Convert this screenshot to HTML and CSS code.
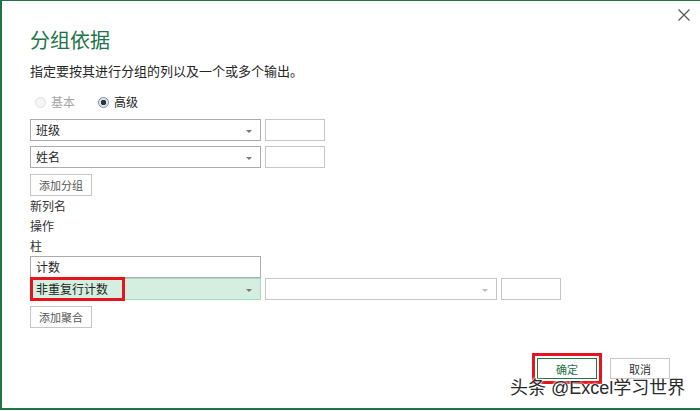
FILE: index.html
```html
<!DOCTYPE html>
<html>
<head>
    <title>分组依据</title>
    <link rel="stylesheet" href="styles.css">
</head>
<body>
    <div class="dialog">
        <button class="close" aria-label="关闭">
            <svg width="12" height="12" viewBox="0 0 12 12">
                <path d="M0.5 0.5 L11.5 11.5 M11.5 0.5 L0.5 11.5" stroke="#555" stroke-width="1.2" fill="none"/>
            </svg>
        </button>

        <h1 class="title">分组依据</h1>
        <p class="subtitle">指定要按其进行分组的列以及一个或多个输出。</p>

        <div class="mode">
            <label class="radio disabled"><span class="dot"></span>基本</label>
            <label class="radio checked"><span class="dot"></span>高级</label>
        </div>

        <div class="group-rows">
            <div class="row">
                <div class="select">班级<i class="arrow"></i></div>
                <div class="box"></div>
            </div>
            <div class="row">
                <div class="select">姓名<i class="arrow"></i></div>
                <div class="box"></div>
            </div>
        </div>
        <button class="btn">添加分组</button>

        <div class="label">新列名</div>
        <div class="label">操作</div>
        <div class="label">柱</div>

        <div class="text-input">计数</div>
        <div class="row">
            <div class="select active">非重复行计数<i class="arrow"></i><span class="mark"></span></div>
            <div class="select wide empty"><i class="arrow"></i></div>
            <div class="box"></div>
        </div>
        <button class="btn">添加聚合</button>

        <div class="footer">
            <button class="btn ok">确定</button>
            <button class="btn">取消</button>
        </div>

        <div class="watermark">头条 @Excel学习世界</div>
    </div>
</body>
</html>
```

FILE: styles.css
```css
html, body {
    margin: 0;
    padding: 0;
    background: #fff;
}
body {
    font-family: "Noto Sans CJK SC", "Liberation Sans", sans-serif;
    color: #262626;
}
.dialog {
    position: relative;
    box-sizing: border-box;
    height: 410px;
    border-left: 2px solid #217346;
    border-top: 1px solid #217346;
    border-bottom: 2px solid #217346;
    box-shadow: 0 1px 0 #b8b8b8;
    padding: 0 30px 0 28px;
}
.close {
    position: absolute;
    top: 8px;
    right: 10px;
    padding: 0;
    border: none;
    background: none;
    width: 12px;
    height: 12px;
}
.close svg {
    display: block;
}
.title {
    margin: 27px 0 0;
    font-size: 20px;
    line-height: 24px;
    font-weight: normal;
    color: #217346;
}
.subtitle {
    margin: 11px 0 0;
    font-size: 13px;
    line-height: 16px;
}
.mode {
    display: flex;
    gap: 23px;
    margin: 15px 0 0 5px;
    font-size: 12px;
    line-height: 16px;
}
.radio {
    display: flex;
    align-items: center;
    gap: 5px;
}
.radio .dot {
    box-sizing: border-box;
    width: 11px;
    height: 11px;
    border-radius: 50%;
}
.radio.disabled {
    color: #a6a6a6;
}
.radio.disabled .dot {
    border: 1px solid #e2e2e2;
    background: #f6f6f6;
}
.radio.checked .dot {
    border: 1px solid #6e8fae;
    background: radial-gradient(circle, #333 0 2.5px, #dfe6ee 3px);
}
.group-rows {
    display: flex;
    flex-direction: column;
    gap: 5px;
    margin-top: 9px;
}
.row {
    display: flex;
    gap: 4px;
}
.select, .text-input {
    position: relative;
    box-sizing: border-box;
    width: 231px;
    height: 22px;
    border: 1px solid #ababab;
    padding-left: 5px;
    font-size: 12px;
    line-height: 20px;
    background: #fff;
}
.select.wide {
    width: 232px;
}
.select.empty {
    border-color: #c6c6c6;
}
.select.empty .arrow {
    border-top-color: #bbb;
}
.select.active {
    background: #d4efdf;
    border-color: #a8dbbd;
}
.arrow {
    position: absolute;
    right: 8px;
    top: 10px;
    width: 0;
    height: 0;
    border-left: 3px solid transparent;
    border-right: 3px solid transparent;
    border-top: 3px solid #777;
}
.mark {
    position: absolute;
    left: -1px;
    top: -2px;
    box-sizing: border-box;
    width: 95px;
    height: 24px;
    border: 3px solid #e8141d;
}
.box {
    box-sizing: border-box;
    width: 60px;
    height: 22px;
    border: 1px solid #c6c6c6;
}
.btn {
    box-sizing: border-box;
    width: 62px;
    height: 22px;
    margin-top: 6px;
    padding: 0;
    border: 1px solid #c6c6c6;
    background: #fff;
    font-family: inherit;
    font-size: 11px;
    color: #555;
}
.label {
    font-size: 12px;
    line-height: 20px;
    color: #333;
}
.footer {
    display: flex;
    justify-content: flex-end;
    gap: 13px;
    margin-top: 30px;
}
.footer .btn {
    width: 60px;
    height: 21px;
    margin: 0;
    color: #333;
}
.footer .ok {
    border-color: #217346;
    color: #217346;
    outline: 3px solid #e8141d;
    outline-offset: 2px;
}
.watermark {
    position: absolute;
    left: 508px;
    top: 377px;
    font-family: "Liberation Sans", "Noto Sans CJK SC", sans-serif;
    font-size: 18px;
    line-height: 20px;
    color: #2b2b2b;
    text-shadow: 0 0 2px #fff, 0 0 2px #fff, 0 0 3px #fff;
}
```
